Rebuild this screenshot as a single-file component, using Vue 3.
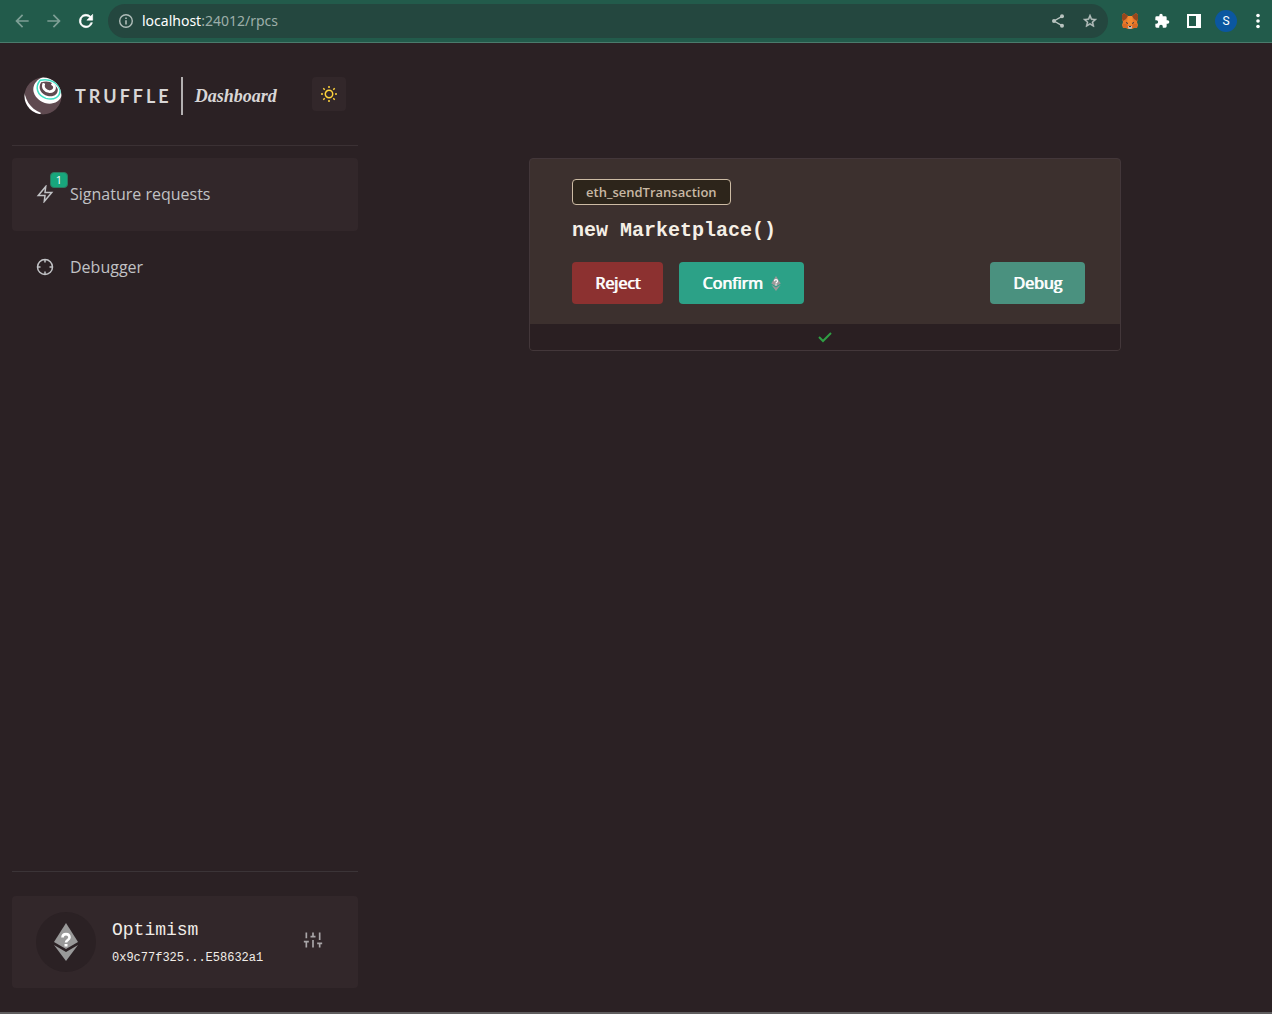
<script setup>
import { ref } from 'vue'

const url = ref('localhost:24012/rpcs')
const requests = ref(1)
</script>

<template>
  <div class="window">
    <header class="toolbar">
      <button class="tool dim" aria-label="Back">
        <svg viewBox="0 0 24 24"><path d="M20 11H7.8l5.6-5.6L12 4l-8 8 8 8 1.4-1.4L7.8 13H20z" /></svg>
      </button>
      <button class="tool dim" aria-label="Forward">
        <svg viewBox="0 0 24 24"><path d="M12 4l-1.4 1.4 5.6 5.6H4v2h12.2l-5.6 5.6L12 20l8-8z" /></svg>
      </button>
      <button class="tool reload" aria-label="Reload">
        <svg viewBox="0 0 24 24"><path d="M17.650 6.350A8 8 0 1 0 19.730 14h-2.080A6 6 0 1 1 12 6c1.660 0 3.140.690 4.220 1.780L13 11h7V4z" stroke="currentColor" stroke-width=".7" /></svg>
      </button>
      <div class="address">
        <svg class="info" viewBox="0 0 16 16"><circle cx="8" cy="8" r="6.3" fill="none" stroke="currentColor" stroke-width="1.4" /><path d="M7.2 7.2h1.6v4.2H7.2zM7.2 4.5h1.6v1.6H7.2z" fill="currentColor" /></svg>
        <a class="url" href="#">{{ url.split(':')[0] }}<span>:{{ url.split(':')[1] }}</span></a>
        <button class="tool grey" aria-label="Share">
          <svg viewBox="0 0 24 24"><path d="M18 5L6 12l12 7" fill="none" stroke="currentColor" stroke-width="2" /><circle cx="18" cy="5" r="3" /><circle cx="6" cy="12" r="3" /><circle cx="18" cy="19" r="3" /></svg>
        </button>
        <button class="tool grey" aria-label="Bookmark">
          <svg viewBox="0 0 24 24"><path d="M22 9.2l-7.2-.6L12 2 9.200 8.600 2 9.200l5.500 4.700L5.800 21 12 17.300 18.200 21l-1.600-7.100zM12 15.400l-3.800 2.300 1-4.300-3.300-2.900 4.400-.4L12 6.100l1.700 4 4.400.4-3.300 2.900 1 4.300z" stroke="currentColor" stroke-width=".7" /></svg>
        </button>
      </div>
      <button class="tool" aria-label="MetaMask">
        <svg viewBox="0 0 16 16">
          <path d="M0 2l2-2 4 3h4l4-3 2 2v4l-1 3 1 3-1 3h-3l-2 1H6l-2-1H1l-1-3 1-3-1-3z" fill="#e8782a" />
          <path d="M0 2l2-2 4 3-2 3-3 2-1-2zM16 2l-2-2-4 3 2 3 3 2 1-2z" fill="#93471e" />
          <path d="M6 3h4l1 6-1 3H6L5 9z" fill="#f28a31" />
          <path d="M4 9l2 1v1l-2-1zM12 9l-2 1v1l2-1z" fill="#2d3a46" />
          <path d="M1 11h4l1 4-2 0H1zM15 11h-4l-1 4 2 0h3z" fill="#d86a25" />
          <path d="M6 13h4v2l-1 1H7l-1-1z" fill="#c4b5a8" /><path d="M7 13h2v1H7z" fill="#31353b" />
        </svg>
      </button>
      <button class="tool" aria-label="Extensions">
        <svg viewBox="0 0 24 24"><path d="M20.500 11H19V7a2 2 0 0 0-2-2h-4V3.500a2.500 2.500 0 0 0-5 0V5H4a2 2 0 0 0-2 2v3.800h1.500a2.700 2.700 0 0 1 0 5.400H2V20a2 2 0 0 0 2 2h3.800v-1.500a2.700 2.700 0 0 1 5.400 0V22H17a2 2 0 0 0 2-2v-4h1.500a2.500 2.500 0 0 0 0-5z" /></svg>
      </button>
      <button class="tool" aria-label="Side panel">
        <svg viewBox="0 0 16 16"><path d="M1 1h14v14H1zM3 3v10h7V3z" fill-rule="evenodd" /></svg>
      </button>
      <button class="avatar" aria-label="Profile">S</button>
      <button class="tool more" aria-label="Menu">
        <svg viewBox="0 0 16 16"><circle cx="8" cy="2.500" r="1.800" /><circle cx="8" cy="8" r="1.800" /><circle cx="8" cy="13.500" r="1.800" /></svg>
      </button>
    </header>

    <div class="page">
      <aside class="sidebar">
        <div class="brand">
          <div class="lockup">
            <svg class="logo" viewBox="0 0 40 40">
              <defs><clipPath id="ball"><circle cx="20" cy="20" r="19.500" /></clipPath></defs>
              <g clip-path="url(#ball)">
                <circle cx="20" cy="20" r="20" fill="#5f4a50" />
                <path d="M0 10C0 23 6 33 18 38L16 40H0z" fill="#fff" />
                <path d="M20 0C8 5 6 17 17 25C26 31 37 28 40 19V9C36 3 29 0 20 0z" fill="#fff" />
                <path d="M17 3.500C11 11 14 19 23 22.500C32 25 38 21 38 14C36 6 27 1 17 3.500z" fill="none" stroke="#3fe0c5" stroke-width="1.600" />
                <path d="M18 5.500C14 12 18 18 25 20C32 21 36 18 35.500 12.500C32 6 26 3 18 5.500z" fill="#5f4a50" />
                <path d="M21 6.500C19 11 22 15 27 15.500C33 15 34 9.500 29 7" fill="none" stroke="#fff" stroke-width="2.800" />
              </g>
            </svg>
            <span class="wordmark">TRUFFLE</span>
            <span class="product">Dashboard</span>
          </div>
          <button class="theme" aria-label="Toggle colour scheme">
            <svg viewBox="0 0 18 18" fill="none" stroke="currentColor" stroke-width="1.500"><circle cx="9" cy="9" r="3.700" /><path d="M9 1v2M9 15v2M1 9h2M15 9h2M3.300 3.300l1.400 1.400M13.300 13.300l1.400 1.400M3.300 14.700l1.400-1.400M13.300 4.700l1.400-1.400" /></svg>
          </button>
        </div>
        <nav class="nav">
          <a class="link active" href="#">
            <span class="glyph">
              <svg viewBox="0 0 24 24" class="line"><path d="M13 2L3 14h9l-1 8 10-12h-9z" /></svg>
              <span class="count">{{ requests }}</span>
            </span>
            Signature requests
          </a>
          <a class="link" href="#">
            <span class="glyph">
              <svg viewBox="0 0 24 24" class="line"><circle cx="12" cy="12" r="10" /><path d="M22 12h-4M6 12H2M12 6V2M12 22v-4" /></svg>
            </span>
            Debugger
          </a>
        </nav>
        <div class="bottom">
          <div class="network">
            <div class="chain">
              <svg viewBox="0 0 24 38"><path d="M12 0l12 19-12 7L0 19z" fill="#999" /><path d="M12 29L0 22l12 16 12-16z" fill="#999" /><path d="M8.500 14.500c0-4.500 7-4.500 7 0 0 2.500-3.500 2.500-3.500 5" fill="none" stroke="#fff" stroke-width="2.600" /><path d="M10.500 21h3v2.500h-3z" fill="#fff" /></svg>
            </div>
            <div class="account">
              <div class="name">Optimism</div>
              <div class="hash">0x9c77f325...E58632a1</div>
            </div>
            <button class="settings" aria-label="Network settings">
              <svg viewBox="0 0 24 24" class="line"><path d="M4 21v-7M4 10V3M12 21v-9M12 8V3M20 21v-5M20 12V3M1 14h6M9 8h6M17 16h6" /></svg>
            </button>
          </div>
        </div>
      </aside>

      <main class="main">
        <article class="card">
          <div class="body">
            <span class="method">eth_sendTransaction</span>
            <h1>new Marketplace()</h1>
            <div class="actions">
              <button class="btn reject">Reject</button>
              <button class="btn confirm">Confirm
                <svg viewBox="0 0 24 38"><path d="M12 0l12 19-12 7L0 19z" fill="#999" /><path d="M12 29L0 22l12 16 12-16z" fill="#999" /><path d="M8 13c0-5 8-5 8 0 0 3-4 3-4 6" fill="none" stroke="#fff" stroke-width="3" /><path d="M10.500 21h3v3h-3z" fill="#fff" /></svg>
              </button>
              <button class="btn debug">Debug</button>
            </div>
          </div>
          <footer class="status">
            <svg viewBox="0 0 14 12"><path d="M1 6l4 4 8-8" fill="none" stroke="#2f9e44" stroke-width="2" /></svg>
          </footer>
        </article>
      </main>
    </div>
  </div>
</template>

<style>
body {
  margin: 0;
  background: #2b2124;
}
</style>

<style scoped>
* {
  box-sizing: border-box;
}
.window {
  display: flex;
  flex-direction: column;
  min-height: 100vh;
  border-bottom: 2px solid #5f5d5e;
  font-family: "Open Sans", sans-serif;
  color: #c1c2c5;
}
button {
  padding: 0;
  border: 0;
  background: none;
  color: inherit;
  font-family: inherit;
}
a {
  color: inherit;
  text-decoration: none;
}
svg {
  display: block;
  flex: none;
}
.toolbar {
  display: flex;
  align-items: center;
  gap: 16px;
  height: 43px;
  padding: 0 6px 0 14px;
  background: #225b4b;
  border-bottom: 1px solid #4a7b6c;
  color: #fff;
}
.tool {
  flex: none;
  width: 16px;
}
.tool svg {
  width: 16px;
  height: 16px;
  fill: currentColor;
}
.tool.dim {
  color: #7d9f95;
}
.tool.dim svg,
.tool.reload svg {
  width: 20px;
  height: 20px;
  margin: 0 -2px;
}
.tool.grey {
  color: #b9c3c0;
}
.address {
  display: flex;
  flex: 1;
  align-items: center;
  gap: 16px;
  height: 34px;
  margin: 0 -2px;
  padding: 0 10px;
  border-radius: 17px;
  background: #24473f;
}
.info {
  width: 16px;
  height: 16px;
  margin-right: -8px;
  color: #b0bdb9;
}
.url {
  flex: 1;
  padding-bottom: 1px;
  font: 14px/20px "Noto Sans", sans-serif;
}
.url span {
  color: #9caea9;
}
.avatar {
  flex: none;
  width: 22px;
  height: 22px;
  margin: 0 -3px;
  border-radius: 50%;
  background: #0b57a0;
  font: 12px Roboto, sans-serif;
}
.page {
  display: flex;
  flex: 1;
}
.sidebar {
  display: flex;
  flex: none;
  flex-direction: column;
  width: 378px;
  padding: 0 20px 24px 12px;
}
.brand {
  display: flex;
  align-items: center;
  justify-content: space-between;
  height: 103px;
  padding: 0 12px;
  border-bottom: 1px solid #3b3134;
}
.lockup {
  display: flex;
  padding-top: 4px;
}
.logo {
  width: 38px;
  height: 38px;
}
.wordmark {
  margin-left: 13px;
  font: 700 18px/38px Lato, sans-serif;
  letter-spacing: 3px;
  color: #d8d6d6;
}
.product {
  margin-left: 9px;
  padding-left: 12px;
  border-left: 2px solid #b3b0b1;
  font: italic 700 18px/38px "Liberation Serif", serif;
  color: #d8d6d6;
}
.theme {
  display: flex;
  align-items: center;
  justify-content: center;
  width: 34px;
  height: 34px;
  border-radius: 4px;
  background: #32272a;
  color: #ffd43b;
}
.theme svg {
  width: 18px;
  height: 18px;
}
.nav {
  margin-top: 12px;
}
.link {
  display: flex;
  align-items: center;
  gap: 16px;
  height: 73px;
  padding: 0 24px 2px;
  border-radius: 4px;
  font-size: 16px;
}
.active,
.network {
  background: #32272a;
}
.glyph {
  position: relative;
}
.line {
  width: 18px;
  height: 18px;
  fill: none;
  stroke: currentColor;
  stroke-width: 2;
}
.count {
  position: absolute;
  top: -13px;
  left: 14px;
  width: 18px;
  border: 1px solid #2b7a60;
  border-radius: 4px;
  background: #18a67c;
  color: #fff;
  font-size: 11px;
  line-height: 14px;
  text-align: center;
}
.bottom {
  margin-top: auto;
  padding-top: 24px;
  border-top: 1px solid #3b3437;
}
.network {
  display: flex;
  align-items: center;
  gap: 16px;
  height: 92px;
  padding: 0 35px 0 24px;
  border-radius: 4px;
}
.chain {
  display: flex;
  align-items: center;
  justify-content: center;
  width: 60px;
  height: 60px;
  border-radius: 50%;
  background: #2b2124;
}
.chain svg {
  width: 24px;
  height: 38px;
}
.account {
  flex: 1;
  padding-top: 4px;
  font-family: "Liberation Mono", monospace;
  color: #f1ede8;
}
.name {
  font-size: 18px;
  line-height: 28px;
}
.hash {
  font-size: 12px;
  line-height: 28px;
}
.settings {
  padding-bottom: 4px;
  color: #a9a6a8;
}
.settings svg {
  width: 20px;
  height: 20px;
}
.main {
  flex: 1;
  padding-top: 115px;
}
.card {
  max-width: 592px;
  margin: 0 auto;
  overflow: hidden;
  border: 1px solid #43373a;
  border-radius: 4px;
  background: #3c302e;
}
.body {
  padding: 20px 35px 20px 42px;
}
.method {
  display: block;
  width: fit-content;
  padding: 0 13px;
  border: 1px solid #cdbba4;
  border-radius: 4px;
  background: #2d251b;
  color: #c8b8a4;
  font-size: 13px;
  font-weight: 600;
  line-height: 24px;
}
h1 {
  margin: 13px 0 19px;
  font: 700 20px/25px "Liberation Mono", monospace;
  color: #f5efe6;
}
.actions {
  display: flex;
  gap: 16px;
}
.btn {
  display: flex;
  align-items: center;
  gap: 8px;
  height: 42px;
  padding: 0 23px;
  border-radius: 4px;
  color: #fff;
  font-size: 16px;
  text-shadow: 1px 0 0 currentColor;
}
.btn svg {
  width: 10px;
  height: 15px;
}
.reject {
  background: #8c3130;
}
.confirm {
  background: #2ca187;
}
.debug {
  margin-left: auto;
  background: #4a917f;
}
.status {
  display: flex;
  align-items: center;
  justify-content: center;
  height: 26px;
  background: #2a1f22;
}
.status svg {
  width: 14px;
  height: 12px;
}
</style>
